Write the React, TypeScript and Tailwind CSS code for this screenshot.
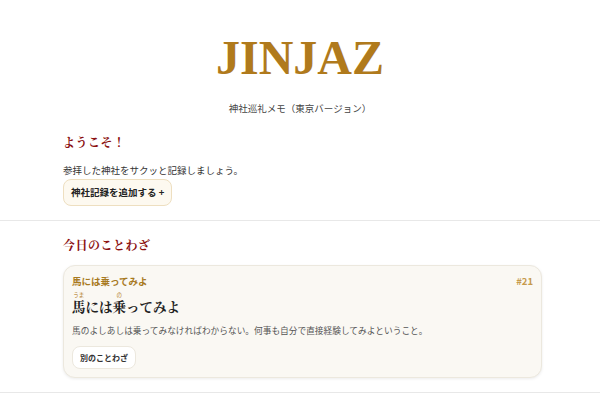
const SANS = "font-['Noto_Sans_CJK_JP','Noto_Sans',sans-serif]";
const SERIF = "font-['Liberation_Serif','Noto_Serif_CJK_JP','Noto_Sans_CJK_JP',serif]";

function Ruby({ base, reading }: { base: string; reading: string }) {
  return (
    <span className="flex flex-col items-center">
      <span className={`${SANS} text-[5.5px] font-normal leading-[7px] text-[#b07a1c]`}>{reading}</span>
      <span className="leading-[18px]">{base}</span>
    </span>
  );
}

export default function App() {
  return (
    <div className={`min-h-screen bg-white text-[#333] ${SANS}`}>
      <header className="pt-[30px] text-center">
        <h1 className={`${SERIF} text-[48px] font-bold leading-[56px] text-[#b07a1c]`}>JINJAZ</h1>
        <p className="mt-[15px] text-[9.5px] leading-[14px] text-[#444]">神社巡礼メモ（東京バージョン）</p>
      </header>

      <section className="border-b border-[#e8e8e8] pb-[14px] pl-[63px] pr-[58px] pt-[19px]">
        <h2 className={`${SERIF} text-[12px] font-bold leading-[18px] tracking-[0.5px] text-[#8b1010]`}>ようこそ！</h2>
        <p className="mt-[11px] text-[9.5px] leading-[14px] text-[#333]">参拝した神社をサクッと記録しましょう。</p>
        <button className="mt-[2px] rounded-lg border border-[#eedfc0] bg-[#fdf9f0] px-[7px] py-[5px] text-[9.5px] font-bold leading-[15px] text-[#222]">
          神社記録を追加する +
        </button>
      </section>

      <section className="border-b border-[#e8e8e8] pb-[14px] pl-[63px] pr-[58px] pt-[16px]">
        <h2 className={`${SERIF} text-[12px] font-bold leading-[18px] tracking-[0.5px] text-[#8b1010]`}>今日のことわざ</h2>
        <div className="mt-[10px] rounded-xl border border-[#ece8de] bg-[#faf8f3] px-[8px] pb-[8px] pt-[8px] shadow-[0_1px_3px_rgba(0,0,0,0.08)]">
          <div className="flex items-center justify-between">
            <span className="text-[9.5px] font-bold leading-[14px] text-[#a87a1f]">馬には乗ってみよ</span>
            <span className="text-[9.5px] font-bold leading-[14px] text-[#c69a4c]">#21</span>
          </div>
          <div className={`${SERIF} mt-[4px] flex items-end text-[13.5px] font-bold text-[#222]`}>
            <Ruby base="馬" reading="うま" />
            <span className="leading-[18px]">には</span>
            <Ruby base="乗" reading="の" />
            <span className="leading-[18px]">ってみよ</span>
          </div>
          <p className="mt-[7px] text-[8.7px] leading-[14px] text-[#555]">
            馬のよしあしは乗ってみなければわからない。何事も自分で直接経験してみよということ。
          </p>
          <button className="mt-[8px] rounded-lg border border-[#ece8de] bg-white px-[7px] py-[4px] text-[8px] font-bold leading-[13px] text-[#333]">
            別のことわざ
          </button>
        </div>
      </section>
    </div>
  );
}
